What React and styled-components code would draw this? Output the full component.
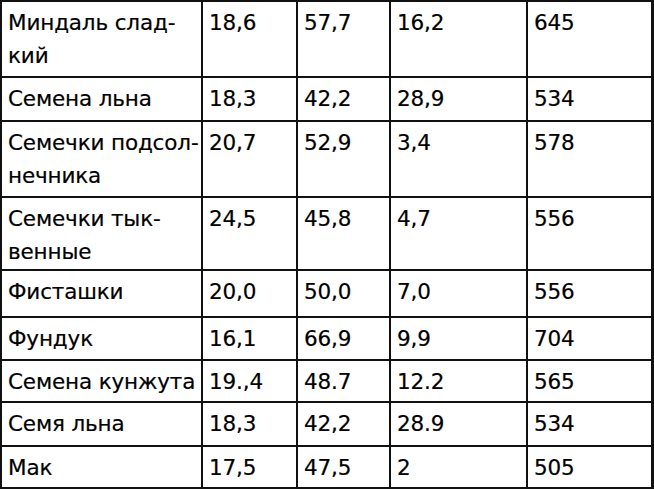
import React from "react";
import styled, { createGlobalStyle } from "styled-components";

const Global = createGlobalStyle`
  html, body { margin: 0; padding: 0; background: #ffffff; }
  body { font-family: "DejaVu Sans", "Liberation Sans", sans-serif; }
`;

const Table = styled.div`
  width: 654px;
  box-sizing: border-box;
  border-top: 2px solid #111;
  border-left: 2px solid #111;
  border-right: 3px solid #111;
  display: flex;
  flex-direction: column;
  background: #fff;
`;

const Row = styled.div`
  display: grid;
  grid-template-columns: 201px 95px 93px 137px 1fr;
  height: ${(p) => p.$h}px;
  box-sizing: border-box;
  border-bottom: 2px solid #111;
`;

const Cell = styled.div`
  box-sizing: border-box;
  padding: 4px 4px 0 6px;
  border-right: ${(p) => (p.$last ? "none" : "2px solid #111")};
  font-size: 21.5px;
  line-height: 33px;
  letter-spacing: -0.15px;
  color: #000;
  white-space: nowrap;
  overflow: hidden;
  -webkit-text-stroke: 0.2px #000;
`;

const rows = [
  { h: 76, name: ["Миндаль слад-", "кий"], v: ["18,6", "57,7", "16,2", "645"] },
  { h: 44, name: ["Семена льна"], v: ["18,3", "42,2", "28,9", "534"] },
  { h: 76, name: ["Семечки подсол-", "нечника"], v: ["20,7", "52,9", "3,4", "578"] },
  { h: 73, name: ["Семечки тык-", "венные"], v: ["24,5", "45,8", "4,7", "556"] },
  { h: 47, name: ["Фисташки"], v: ["20,0", "50,0", "7,0", "556"] },
  { h: 43, name: ["Фундук"], v: ["16,1", "66,9", "9,9", "704"] },
  { h: 42, name: ["Семена кунжута"], v: ["19.,4", "48.7", "12.2", "565"] },
  { h: 44, name: ["Семя льна"], v: ["18,3", "42,2", "28.9", "534"] },
  { h: 42, name: ["Мак"], v: ["17,5", "47,5", "2", "505"] },
];

export default function App() {
  return (
    <>
      <Global />
      <Table>
        {rows.map((r, i) => (
          <Row key={i} $h={r.h}>
            <Cell>
              {r.name.map((line, j) => (
                <React.Fragment key={j}>
                  {j > 0 && <br />}
                  {line}
                </React.Fragment>
              ))}
            </Cell>
            {r.v.map((val, j) => (
              <Cell key={j} $last={j === r.v.length - 1}>
                {val}
              </Cell>
            ))}
          </Row>
        ))}
      </Table>
    </>
  );
}
